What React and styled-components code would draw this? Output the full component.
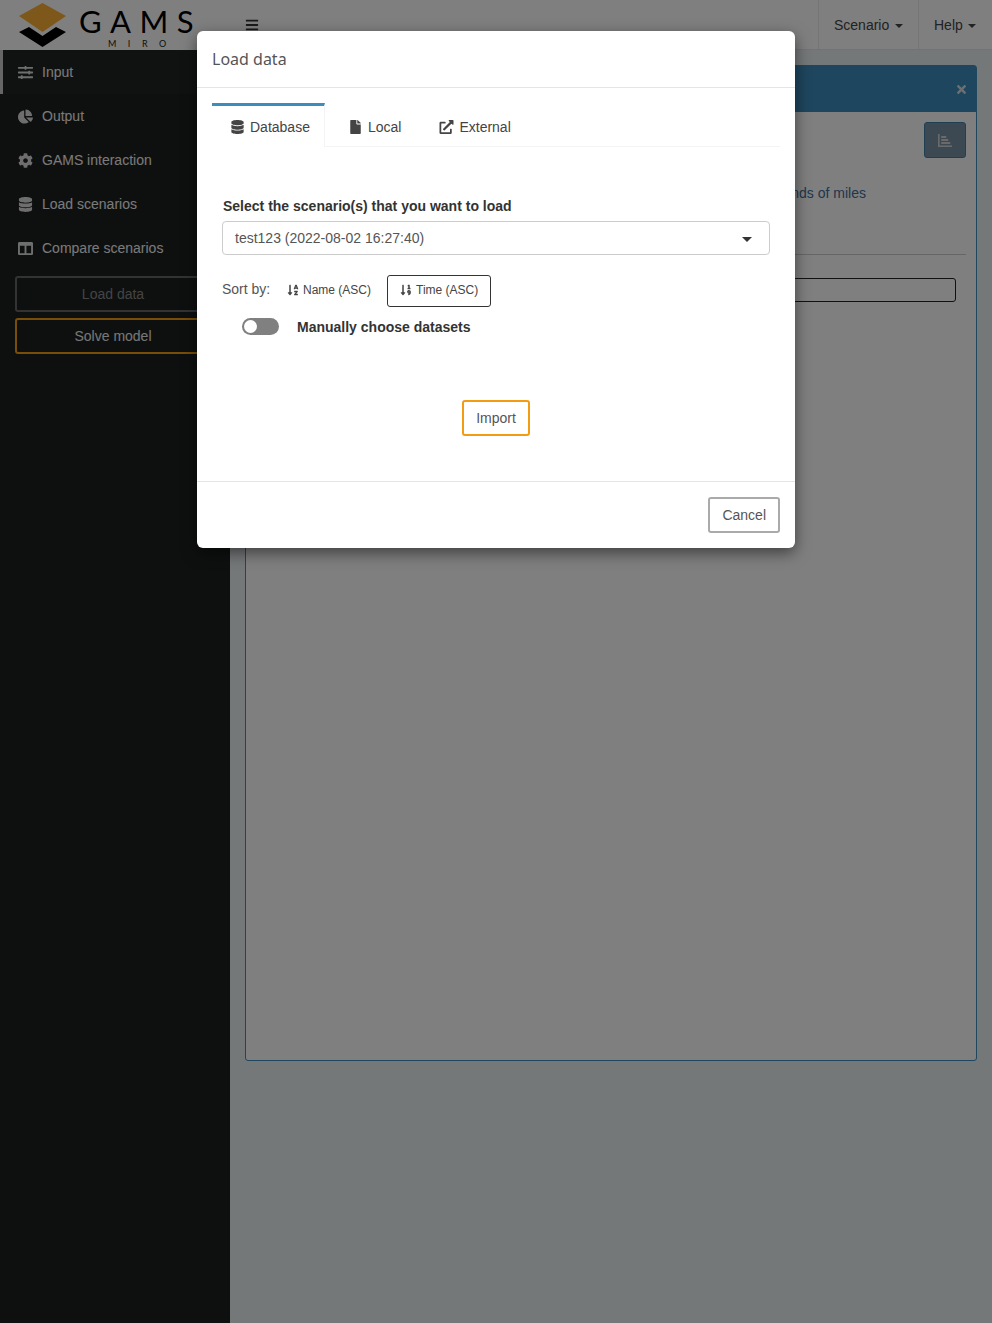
import React from "react";
import styled, { createGlobalStyle } from "styled-components";
import {
  FaSlidersH, FaChartPie, FaCog, FaDatabase, FaColumns, FaFile,
  FaExternalLinkAlt, FaSortAlphaDown, FaSortNumericDown, FaBars, FaTimes,
} from "react-icons/fa";

const Global = createGlobalStyle`
  html, body { margin: 0; padding: 0; }
  body { font-family: "Liberation Sans", Arial, sans-serif; font-size: 14px; color: #333; background: #eaf1f3; }
  * { box-sizing: border-box; }
`;

const Page = styled.div`
  position: relative;
  height: 1323px;
  overflow: hidden;
  display: grid;
  grid-template-columns: 230px 1fr;
  grid-template-rows: 50px 1fr;
`;
const TopBrand = styled.div`
  background: #fff;
  display: flex;
  align-items: flex-start;
  padding: 3px 0 0 19px;
  gap: 12px;
  overflow: hidden;
`;
const BrandText = styled.div`
  display: flex;
  flex-direction: column;
  align-items: flex-start;
`;
const Gams = styled.span`
  font-family: Lato, sans-serif;
  font-weight: 400;
  font-size: 31px;
  line-height: 36px;
  letter-spacing: 8.5px;
  color: #000;
`;
const Miro = styled.span`
  font-family: Lato, sans-serif;
  font-size: 9px;
  line-height: 10px;
  margin: 0 0 0 29px;
  letter-spacing: 11.5px;
  color: #222;
`;
const TopBar = styled.header`
  background: #fff;
  border-bottom: 1px solid #e6e6e6;
  display: flex;
  align-items: stretch;
  justify-content: space-between;
  padding-left: 15px;
`;
const Burger = styled.div`
  display: flex;
  align-items: center;
  font-size: 14px;
  color: #333;
`;
const Menus = styled.nav`
  display: flex;
`;
const Menu = styled.div`
  width: ${(p) => p.$w}px;
  border-left: 1px solid #eaeaea;
  display: flex;
  align-items: center;
  padding-left: 15px;
  gap: 5.5px;
  color: #444;
`;
const Caret = styled.span`
  width: 0;
  height: 0;
  border-left: ${(p) => p.$s || 4}px solid transparent;
  border-right: ${(p) => p.$s || 4}px solid transparent;
  border-top: ${(p) => p.$s || 4}px solid ${(p) => p.$c || "#444"};
  margin-top: 2px;
`;
const Side = styled.aside`
  background: #1c2020;
  display: flex;
  flex-direction: column;
`;
const SideItem = styled.div`
  height: 44px;
  display: flex;
  align-items: center;
  padding-left: 18px;
  color: #f4f4f4;
  background: ${(p) => (p.$active ? "#202525" : "transparent")};
  box-shadow: ${(p) => (p.$active ? "inset 3px 0 0 #ccc" : "none")};
`;
const SideIcon = styled.span`
  width: 24px;
  flex: none;
  display: flex;
  align-items: center;
  color: #ddd;
  font-size: 15px;
`;
const SideButton = styled.div`
  margin: ${(p) => p.$m} 19px 0 15px;
  height: 36px;
  border: 2px solid ${(p) => p.$c};
  border-radius: 3px;
  display: flex;
  align-items: center;
  justify-content: center;
  color: ${(p) => p.$t};
`;
const Main = styled.main`
  padding: 15px 15px 0;
`;
const Panel = styled.section`
  height: 996px;
  background: #fff;
  border: 1px solid #3c8dbc;
  border-radius: 3px;
  display: flex;
  flex-direction: column;
`;
const PanelHead = styled.div`
  height: 46px;
  background: #3c8dbc;
  color: #ddd;
  display: flex;
  align-items: center;
  justify-content: flex-end;
  padding-right: 8px;
  flex: none;
  font-size: 13px;
`;
const PanelBody = styled.div`
  padding: 10px 10px 0;
  display: flex;
  flex-direction: column;
`;
const ChartBtn = styled.div`
  align-self: flex-end;
  width: 42px;
  height: 36px;
  background: #7a93a5;
  border: 1px solid #3f7fa6;
  border-radius: 3px;
  display: flex;
  align-items: center;
  justify-content: center;
`;
const Note = styled.p`
  margin: 25px 100px 0 0;
  align-self: flex-end;
  color: #3c6e9c;
  line-height: 20px;
`;
const Rule = styled.hr`
  border: 0;
  border-top: 1px solid #ccc;
  margin: 51px 0 0;
  width: 100%;
`;
const Field = styled.div`
  margin: 23px 10px 0 0;
  height: 24px;
  border: 1px solid #222;
  border-radius: 3px;
`;
const Backdrop = styled.div`
  position: absolute;
  inset: 0;
  background: rgba(0, 0, 0, 0.5);
`;
const Modal = styled.div`
  position: absolute;
  left: 197px;
  top: 31px;
  width: 598px;
  background: #fff;
  border-radius: 6px;
  box-shadow: 0 5px 15px rgba(0, 0, 0, 0.5);
  display: flex;
  flex-direction: column;
`;
const ModalHead = styled.div`
  height: 57px;
  padding: 0 15px;
  border-bottom: 1px solid #e5e5e5;
  display: flex;
  align-items: center;
`;
const Title = styled.h4`
  margin: 0;
  font-family: "Noto Sans", "Open Sans", sans-serif;
  font-weight: 400;
  font-size: 16px;
  color: #555;
`;
const ModalBody = styled.div`
  padding: 15px 15px 45px;
  display: flex;
  flex-direction: column;
`;
const Tabs = styled.div`
  height: 44px;
  display: flex;
  gap: 5px;
  border-bottom: 1px solid #f4f4f4;
`;
const Tab = styled.div`
  height: 44px;
  display: flex;
  align-items: center;
  gap: 5px;
  padding: 0 ${(p) => (p.$active ? 14 : 15)}px 0 18px;
  color: #444;
  border-top: 3px solid ${(p) => (p.$active ? "#3c8dbc" : "transparent")};
  border-right: ${(p) => (p.$active ? "1px solid #f4f4f4" : "0")};
  background: ${(p) => (p.$active ? "#fff" : "transparent")};
  svg { width: 15px; height: 14px; flex: none; color: #444; }
`;
const Form = styled.div`
  padding: 0 10px;
  display: flex;
  flex-direction: column;
`;
const Label = styled.label`
  margin: 49px 0 0 1px;
  font-weight: 700;
  line-height: 20px;
  color: #333;
`;
const Select = styled.div`
  margin-top: 5px;
  height: 34px;
  border: 1px solid #ccc;
  border-radius: 4px;
  padding: 0 17px 0 12px;
  display: flex;
  align-items: center;
  justify-content: space-between;
  color: #555;
`;
const SortRow = styled.div`
  margin-top: 20px;
  height: 32px;
  display: flex;
  align-items: center;
  color: #555;
`;
const SortLabel = styled.span`
  width: 52px;
  margin-top: -4px;
`;
const SortBtn = styled.div`
  height: 32px;
  padding: 0 12px 2px;
  margin-right: 3px;
  font-size: 12px;
  color: #444;
  display: flex;
  align-items: center;
  gap: 4px;
  border: 1px solid ${(p) => (p.$on ? "#333" : "transparent")};
  border-radius: 3px;
  svg { width: 12px; height: 12px; color: #444; }
`;
const SwitchRow = styled.div`
  margin: 11px 0 0 20px;
  height: 17px;
  display: flex;
  align-items: center;
  gap: 18px;
`;
const Track = styled.div`
  width: 37px;
  height: 17px;
  border-radius: 9px;
  background: #808080;
  padding: 2px;
`;
const Knob = styled.div`
  width: 13px;
  height: 13px;
  border-radius: 50%;
  background: #fff;
`;
const SwitchLabel = styled.span`
  font-weight: 700;
  color: #333;
`;
const Center = styled.div`
  margin-top: 65px;
  display: flex;
  justify-content: center;
`;
const Button = styled.div`
  height: 36px;
  padding: 0 12px;
  border: 2px solid ${(p) => p.$c};
  border-radius: 3px;
  display: flex;
  align-items: center;
  color: #555;
  background: #fff;
`;
const ModalFoot = styled.div`
  border-top: 1px solid #e5e5e5;
  padding: 15px;
  display: flex;
  justify-content: flex-end;
`;

const Logo = () => (
  <svg width="48" height="45" viewBox="0 0 48 45" style={{ flex: "none" }}>
    <path d="M23.5 0 47 13 23.5 29 0 13Z" fill="#fdaf35" />
    <path d="M10 24 23.5 33 37 24 47 29 23.5 44 0 29Z" fill="#000" />
  </svg>
);

const AxisBars = () => (
  <svg width="14" height="13" viewBox="0 0 14 13" fill="#d4d4d4">
    <rect x="0" y="0" width="1.6" height="13" />
    <rect x="0" y="11.4" width="14" height="1.6" />
    <rect x="3.2" y="2" width="5" height="2" />
    <rect x="3.2" y="5" width="7" height="2" />
    <rect x="3.2" y="8" width="9" height="2" />
  </svg>
);

const navItems = [
  [FaSlidersH, "Input", true],
  [FaChartPie, "Output"],
  [FaCog, "GAMS interaction"],
  [FaDatabase, "Load scenarios"],
  [FaColumns, "Compare scenarios"],
];

export default function App() {
  return (
    <>
      <Global />
      <Page>
        <TopBrand>
          <Logo />
          <BrandText>
            <Gams>GAMS</Gams>
            <Miro>MIRO</Miro>
          </BrandText>
        </TopBrand>
        <TopBar>
          <Burger><FaBars /></Burger>
          <Menus>
            <Menu $w={100}>Scenario <Caret /></Menu>
            <Menu $w={74}>Help <Caret /></Menu>
          </Menus>
        </TopBar>
        <Side>
          {navItems.map(([Icon, text, active]) => (
            <SideItem key={text} $active={active}><SideIcon><Icon /></SideIcon>{text}</SideItem>
          ))}
          <SideButton $m="6px" $c="#666" $t="#888">Load data</SideButton>
          <SideButton $m="6px" $c="#f39c12" $t="#eee">Solve model</SideButton>
        </Side>
        <Main>
          <Panel>
            <PanelHead><FaTimes /></PanelHead>
            <PanelBody>
              <ChartBtn><AxisBars /></ChartBtn>
              <Note>distance in thousands of miles</Note>
              <Rule />
              <Field />
            </PanelBody>
          </Panel>
        </Main>
        <Backdrop />
        <Modal>
          <ModalHead><Title>Load data</Title></ModalHead>
          <ModalBody>
            <Tabs>
              <Tab $active><FaDatabase />Database</Tab>
              <Tab><FaFile />Local</Tab>
              <Tab><FaExternalLinkAlt />External</Tab>
            </Tabs>
            <Form>
              <Label>Select the scenario(s) that you want to load</Label>
              <Select>test123 (2022-08-02 16:27:40)<Caret $c="#333" $s={5} /></Select>
              <SortRow>
                <SortLabel>Sort by:</SortLabel>
                <SortBtn><FaSortAlphaDown />Name (ASC)</SortBtn>
                <SortBtn $on><FaSortNumericDown />Time (ASC)</SortBtn>
              </SortRow>
              <SwitchRow>
                <Track><Knob /></Track>
                <SwitchLabel>Manually choose datasets</SwitchLabel>
              </SwitchRow>
              <Center><Button $c="#f39c12">Import</Button></Center>
            </Form>
          </ModalBody>
          <ModalFoot><Button $c="#aaa">Cancel</Button></ModalFoot>
        </Modal>
      </Page>
    </>
  );
}
